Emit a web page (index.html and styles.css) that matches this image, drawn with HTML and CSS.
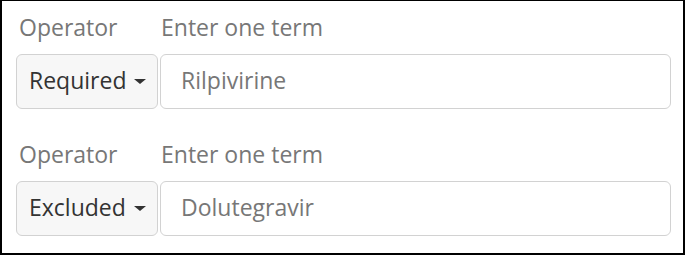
FILE: index.html
```html
<!DOCTYPE html>
<html>
<head>
<meta charset="utf-8">
<link rel="stylesheet" href="styles.css">
</head>
<body>
<div class="panel">
  <div class="term-row">
    <div class="field-label op-label">Operator</div>
    <div class="field-label">Enter one term</div>
    <button class="op-btn">Required <span class="caret"></span></button>
    <div class="term-input">Rilpivirine</div>
  </div>
  <div class="term-row second">
    <div class="field-label op-label">Operator</div>
    <div class="field-label">Enter one term</div>
    <button class="op-btn">Excluded <span class="caret"></span></button>
    <div class="term-input">Dolutegravir</div>
  </div>
</div>
</body>
</html>
```

FILE: styles.css
```css
html, body {
  margin: 0;
  padding: 0;
  background: #fff;
}
.panel {
  box-sizing: border-box;
  width: 685px;
  height: 255px;
  border-top: 1px solid #000;
  border-left: 2px solid #000;
  border-right: 2px solid #000;
  border-bottom: 2px solid #000;
  padding: 12px 0 0 14px;
  font-family: "Open Sans", "Noto Sans", sans-serif;
  font-size: 23px;
}
.term-row {
  display: grid;
  grid-template-columns: 142px 511px;
  column-gap: 2px;
  row-gap: 13px;
}
.term-row.second {
  margin-top: 31px;
}
.field-label {
  color: #777;
  line-height: 28px;
  padding-left: 1px;
}
.field-label.op-label {
  padding-left: 3px;
}
.op-btn {
  box-sizing: border-box;
  height: 55px;
  margin: 0;
  padding: 0 0 4px 12px;
  background: #f7f7f7;
  border: 1px solid #d2d2d2;
  border-radius: 6px;
  font-family: inherit;
  font-size: 23px;
  color: #333;
  text-align: left;
  display: flex;
  align-items: center;
  gap: 8px;
}
.caret {
  display: inline-block;
  width: 0;
  height: 0;
  border-left: 6px solid transparent;
  border-right: 6px solid transparent;
  border-top: 5px solid #333;
  margin-top: 4px;
}
.term-input {
  box-sizing: border-box;
  height: 55px;
  border: 1px solid #d2d2d2;
  border-radius: 6px;
  background: #fff;
  color: #777;
  padding: 0 0 4px 20px;
  display: flex;
  align-items: center;
}
```
